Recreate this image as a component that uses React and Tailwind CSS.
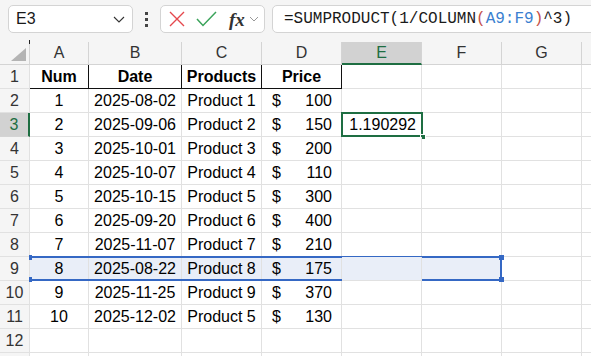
import { useState } from "react";

const rows = [
    [1, "2025-08-02", "Product 1", 100],
    [2, "2025-09-06", "Product 2", 150],
    [3, "2025-10-01", "Product 3", 200],
    [4, "2025-10-07", "Product 4", 110],
    [5, "2025-10-15", "Product 5", 300],
    [6, "2025-09-20", "Product 6", 400],
    [7, "2025-11-07", "Product 7", 210],
    [8, "2025-08-22", "Product 8", 175],
    [9, "2025-11-25", "Product 9", 370],
    [10, "2025-12-02", "Product 5", 130],
];

const letters = ["A", "B", "C", "D", "E", "F", "G", ""];
const widths = ["w-[59px]", "w-[93px]", "w-[80px]", "w-[80px]", "w-[80px]", "w-[80px]", "w-[80px]", "w-[80px]"];

const cell = "h-[24px] shrink-0 border-r border-b border-[#e1e1e1] flex items-center";

const App = () => {
    const [active] = useState("E3");

    return (
        <div className="w-[591px] h-[356px] overflow-hidden bg-white font-['Liberation_Sans',Arial,sans-serif] text-[16px] text-black">
            {/* Formula bar */}
            <div className="h-[42px] bg-[#f5f5f5] flex items-start pt-[5px] pl-[8px]">
                <div className="w-[125px] h-[28px] shrink-0 rounded-[5px] border border-[#d4d4d4] bg-white flex items-center justify-between pl-[7px] pr-[7px]">
                    <span className="text-[16px] text-[#1a1a1a]">{active}</span>
                    <svg width="12" height="7" viewBox="0 0 12 7">
                        <path d="M1 1 L6 6 L11 1" fill="none" stroke="#333" strokeWidth="1.1" />
                    </svg>
                </div>
                <div className="w-[27px] h-[28px] shrink-0 flex flex-col items-center justify-center gap-[3px]">
                    <div className="w-[3px] h-[3px] bg-[#444]" />
                    <div className="w-[3px] h-[3px] bg-[#444]" />
                    <div className="w-[3px] h-[3px] bg-[#444]" />
                </div>
                <div className="w-[105px] h-[28px] shrink-0 rounded-[5px] border border-[#d4d4d4] bg-white flex items-center pl-[8px]">
                    <svg width="16" height="16" viewBox="0 0 16 16">
                        <path d="M1 1 L15 15 M15 1 L1 15" stroke="#e5484d" strokeWidth="1.4" />
                    </svg>
                    <svg width="21" height="16" viewBox="0 0 21 16" className="ml-[11px]">
                        <path d="M1 8 L7 14.5 L20 1" fill="none" stroke="#3aa35a" strokeWidth="1.5" />
                    </svg>
                    <span className="ml-[12px] font-['Liberation_Serif',serif] italic text-[19px] leading-none text-[#333] font-bold">fx</span>
                    <svg width="10" height="6" viewBox="0 0 10 6" className="ml-[4px]">
                        <path d="M1 1 L5 5 L9 1" fill="none" stroke="#999" strokeWidth="1" />
                    </svg>
                </div>
                <div className="w-[340px] h-[28px] shrink-0 ml-[7px] rounded-[5px] border border-[#d4d4d4] bg-white flex items-center pl-[11px] font-['Liberation_Mono',monospace] text-[16px] text-[#1a1a1a] whitespace-nowrap">
                    =SUMPRODUCT(1/COLUMN<span className="text-[#c4504a]">(</span>
                    <span className="text-[#3a7fd0]">A9:F9</span>
                    <span className="text-[#c4504a]">)</span>^3)
                </div>
            </div>

            {/* Column headers */}
            <div className="flex h-[23px] bg-[#f5f5f5] text-[#333]">
                <div className="w-[30px] shrink-0 relative border-r border-b border-[#d4d4d4]">
                    <div className="absolute right-[3px] bottom-[3px] w-0 h-0 border-l-[15px] border-l-transparent border-b-[13px] border-b-[#b4b4b4]" />
                    <div className="absolute right-[-1px] top-[-2px] w-[1px] h-[4px] bg-[#222]" />
                </div>
                {letters.map((l, i) => (
                    <div
                        key={i}
                        className={`${widths[i]} shrink-0 flex items-center justify-center border-r ${
                            l === "E"
                                ? "bg-[#d2d2d2] text-[#1e6e42] border-b-2 border-b-[#1e6e42] border-r-[#d4d4d4]"
                                : "border-b border-[#d4d4d4]"
                        }`}
                    >
                        {l}
                    </div>
                ))}
            </div>

            {/* Row 1 - table header */}
            <div className="flex">
                <div className={`${cell} w-[30px] bg-[#f5f5f5] border-[#d4d4d4] justify-center text-[#333]`}>1</div>
                {["Num", "Date", "Products", "Price"].map((h, i) => (
                    <div key={h} className={`${widths[i]} h-[24px] shrink-0 flex items-center justify-center font-bold border-r border-b border-[#111]`}>
                        {h}
                    </div>
                ))}
                {[4, 5, 6, 7].map((i) => (
                    <div key={i} className={`${cell} ${widths[i]}`} />
                ))}
            </div>

            {/* Data rows */}
            {rows.map((r, idx) => {
                const n = idx + 2;
                const sel = n === 9;
                const selBg = sel ? "bg-[#e9eef8]" : "";
                return (
                    <div key={n} className="flex">
                        <div
                            className={`${cell} w-[30px] justify-center ${
                                n === 3
                                    ? "bg-[#d2d2d2] text-[#1e6e42] border-r-2 border-r-[#1e6e42] border-b-[#d4d4d4]"
                                    : "bg-[#f5f5f5] text-[#333] border-[#d4d4d4]"
                            }`}
                        >
                            {n}
                        </div>
                        <div className={`${cell} ${widths[0]} justify-center relative ${selBg}`}>
                            {r[0]}
                            {sel && (
                                <div className="absolute left-[-1px] top-[-1px] w-[473px] h-[25px] border-y-2 border-r-2 border-[#3568c4]">
                                    <div className="absolute left-0 top-[-3px] w-[3px] h-[5px] bg-[#3568c4]" />
                                    <div className="absolute left-0 bottom-[-3px] w-[3px] h-[5px] bg-[#3568c4]" />
                                    <div className="absolute right-[-4px] top-[-3px] w-[5px] h-[5px] bg-[#3568c4]" />
                                    <div className="absolute right-[-4px] bottom-[-3px] w-[5px] h-[5px] bg-[#3568c4]" />
                                </div>
                            )}
                        </div>
                        <div className={`${cell} ${widths[1]} justify-center ${selBg}`}>{r[1]}</div>
                        <div className={`${cell} ${widths[2]} justify-center ${selBg}`}>{r[2]}</div>
                        <div className={`${cell} ${widths[3]} justify-between pl-[10px] pr-[9px] ${selBg}`}>
                            <span>$</span>
                            <span>{r[3]}</span>
                        </div>
                        <div className={`${cell} ${widths[4]} justify-end pr-[5px] relative ${selBg}`}>
                            {n === 3 && (
                                <>
                                    1.190292
                                    <div className="absolute left-[-1px] top-[-1px] w-[82px] h-[25px] border-2 border-[#1e6e42]">
                                        <div className="absolute right-[-5px] bottom-[-5px] w-[6px] h-[6px] bg-[#1e6e42] border border-white" />
                                    </div>
                                </>
                            )}
                        </div>
                        <div className={`${cell} ${widths[5]} ${selBg}`} />
                        <div className={`${cell} ${widths[6]}`} />
                        <div className={`${cell} ${widths[7]}`} />
                    </div>
                );
            })}

            {/* Row 12 and the edge of row 13 */}
            {[12, 13].map((n) => (
                <div key={n} className="flex">
                    <div className={`${cell} w-[30px] bg-[#f5f5f5] text-[#333] border-[#d4d4d4] justify-center`}>{n === 12 ? n : ""}</div>
                    {widths.map((w, i) => (
                        <div key={i} className={`${cell} ${w}`} />
                    ))}
                </div>
            ))}
        </div>
    );
};

export default App;
